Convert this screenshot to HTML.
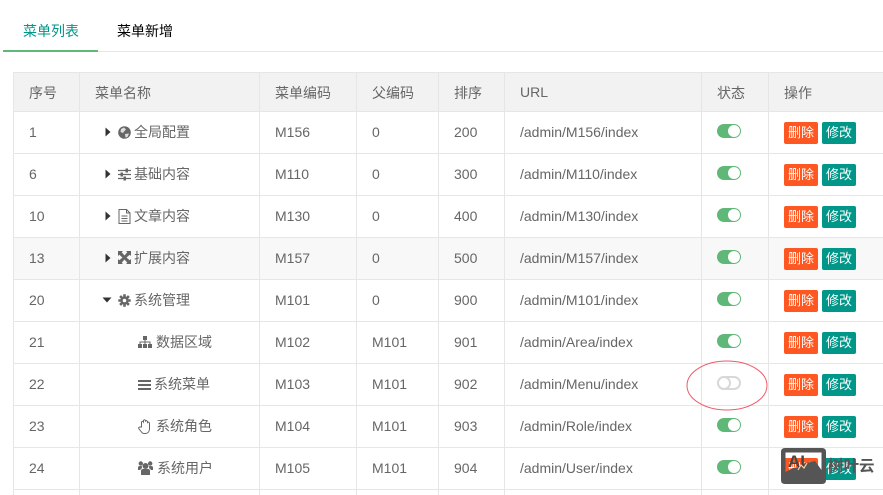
<!DOCTYPE html>
<html><head><meta charset="utf-8">
<style>
html,body{margin:0;padding:0;background:#fff}
body{width:883px;height:495px;overflow:hidden;position:relative;font-family:"Liberation Sans","Noto Sans CJK SC",sans-serif;font-size:14px;color:#666}
.a{position:absolute;white-space:nowrap;line-height:20px}
.l{position:absolute;background:#e6e6e6}
.sw{position:absolute;width:24px;height:14px;left:717px;border-radius:8px;background:#5fb878;box-sizing:border-box}
.sw i{position:absolute;right:1px;top:1px;width:12px;height:12px;border-radius:50%;background:#fff}
.sw.off{background:#fff;border:2px solid #d8d8d8}
.sw.off i{left:-2px;right:auto;top:-2px;width:14px;height:14px;background:#fff;border:2px solid #d8d8d8;box-sizing:border-box}
.b{position:absolute;height:22px;width:34px;line-height:22px;text-align:center;color:#fff;font-size:13px;border-radius:2px}
.d{left:784px;background:#ff5722}.e{left:822px;background:#009688}
svg{position:absolute}
</style></head><body>
<div class="a" style="left:23px;top:21px;color:#009688">菜单列表</div>
<div class="a" style="left:117px;top:21px;color:#000">菜单新增</div>
<div class="l" style="left:3px;top:51px;width:880px;height:1px"></div>
<div class="a" style="left:3px;top:50px;width:95px;height:2px;background:#5fb878"></div>

<div class="a" style="left:13px;top:72px;width:870px;height:39px;background:#f2f2f2"></div>
<div class="a" style="left:13px;top:237px;width:870px;height:42px;background:#f8f8f8"></div>

<div class="l" style="left:13px;top:72px;width:870px;height:1px"></div>
<div class="l" style="left:13px;top:111px;width:870px;height:1px"></div>
<div class="l" style="left:13px;top:153px;width:870px;height:1px"></div>
<div class="l" style="left:13px;top:195px;width:870px;height:1px"></div>
<div class="l" style="left:13px;top:237px;width:870px;height:1px"></div>
<div class="l" style="left:13px;top:279px;width:870px;height:1px"></div>
<div class="l" style="left:13px;top:321px;width:870px;height:1px"></div>
<div class="l" style="left:13px;top:363px;width:870px;height:1px"></div>
<div class="l" style="left:13px;top:405px;width:870px;height:1px"></div>
<div class="l" style="left:13px;top:447px;width:870px;height:1px"></div>
<div class="l" style="left:13px;top:489px;width:870px;height:1px"></div>
<div class="l" style="left:13px;top:72px;width:1px;height:423px"></div>
<div class="l" style="left:79px;top:72px;width:1px;height:423px"></div>
<div class="l" style="left:259px;top:72px;width:1px;height:423px"></div>
<div class="l" style="left:356px;top:72px;width:1px;height:423px"></div>
<div class="l" style="left:438px;top:72px;width:1px;height:423px"></div>
<div class="l" style="left:504px;top:72px;width:1px;height:423px"></div>
<div class="l" style="left:701px;top:72px;width:1px;height:423px"></div>
<div class="l" style="left:768px;top:72px;width:1px;height:423px"></div>

<div class="a" style="left:29px;top:83px">序号</div>
<div class="a" style="left:95px;top:83px">菜单名称</div>
<div class="a" style="left:275px;top:83px">菜单编码</div>
<div class="a" style="left:372px;top:83px">父编码</div>
<div class="a" style="left:454px;top:83px">排序</div>
<div class="a" style="left:520px;top:82px">URL</div>
<div class="a" style="left:717px;top:83px">状态</div>
<div class="a" style="left:784px;top:83px">操作</div>

<!-- rows -->
<div class="a" style="left:29px;top:122px">1</div><div class="a" style="left:134px;top:122px">全局配置</div><div class="a" style="left:275px;top:122px">M156</div><div class="a" style="left:372px;top:122px">0</div><div class="a" style="left:454px;top:122px">200</div><div class="a" style="left:520px;top:122px">/admin/M156/index</div>
<div class="a" style="left:29px;top:164px">6</div><div class="a" style="left:134px;top:164px">基础内容</div><div class="a" style="left:275px;top:164px">M110</div><div class="a" style="left:372px;top:164px">0</div><div class="a" style="left:454px;top:164px">300</div><div class="a" style="left:520px;top:164px">/admin/M110/index</div>
<div class="a" style="left:29px;top:206px">10</div><div class="a" style="left:134px;top:206px">文章内容</div><div class="a" style="left:275px;top:206px">M130</div><div class="a" style="left:372px;top:206px">0</div><div class="a" style="left:454px;top:206px">400</div><div class="a" style="left:520px;top:206px">/admin/M130/index</div>
<div class="a" style="left:29px;top:248px">13</div><div class="a" style="left:134px;top:248px">扩展内容</div><div class="a" style="left:275px;top:248px">M157</div><div class="a" style="left:372px;top:248px">0</div><div class="a" style="left:454px;top:248px">500</div><div class="a" style="left:520px;top:248px">/admin/M157/index</div>
<div class="a" style="left:29px;top:290px">20</div><div class="a" style="left:134px;top:290px">系统管理</div><div class="a" style="left:275px;top:290px">M101</div><div class="a" style="left:372px;top:290px">0</div><div class="a" style="left:454px;top:290px">900</div><div class="a" style="left:520px;top:290px">/admin/M101/index</div>
<div class="a" style="left:29px;top:332px">21</div><div class="a" style="left:156px;top:332px">数据区域</div><div class="a" style="left:275px;top:332px">M102</div><div class="a" style="left:372px;top:332px">M101</div><div class="a" style="left:454px;top:332px">901</div><div class="a" style="left:520px;top:332px">/admin/Area/index</div>
<div class="a" style="left:29px;top:374px">22</div><div class="a" style="left:154px;top:374px">系统菜单</div><div class="a" style="left:275px;top:374px">M103</div><div class="a" style="left:372px;top:374px">M101</div><div class="a" style="left:454px;top:374px">902</div><div class="a" style="left:520px;top:374px">/admin/Menu/index</div>
<div class="a" style="left:29px;top:416px">23</div><div class="a" style="left:156px;top:416px">系统角色</div><div class="a" style="left:275px;top:416px">M104</div><div class="a" style="left:372px;top:416px">M101</div><div class="a" style="left:454px;top:416px">903</div><div class="a" style="left:520px;top:416px">/admin/Role/index</div>
<div class="a" style="left:29px;top:458px">24</div><div class="a" style="left:157px;top:458px">系统用户</div><div class="a" style="left:275px;top:458px">M105</div><div class="a" style="left:372px;top:458px">M101</div><div class="a" style="left:454px;top:458px">904</div><div class="a" style="left:520px;top:458px">/admin/User/index</div>

<!-- arrows -->
<svg style="left:105px;top:127px" width="6" height="10"><path d="M0.5 0.5L5.5 5L0.5 9.5Z" fill="#333"/></svg>
<svg style="left:105px;top:169px" width="6" height="10"><path d="M0.5 0.5L5.5 5L0.5 9.5Z" fill="#333"/></svg>
<svg style="left:105px;top:211px" width="6" height="10"><path d="M0.5 0.5L5.5 5L0.5 9.5Z" fill="#333"/></svg>
<svg style="left:105px;top:253px" width="6" height="10"><path d="M0.5 0.5L5.5 5L0.5 9.5Z" fill="#333"/></svg>
<svg style="left:102px;top:297px" width="10" height="6"><path d="M0.5 0.5L9.5 0.5L5 5.5Z" fill="#333"/></svg>

<!-- icons -->
<svg style="left:118px;top:126px" width="13" height="13" viewBox="0 0 13 13"><circle cx="6.5" cy="6.5" r="6.3" fill="#666"/><path d="M6 1.5L3 3L2.5 6L5 7L6.5 5L8 3.5ZM7 8L11 7.5L9.5 11L7.5 11.5Z" fill="#ddd"/></svg>
<svg style="left:118px;top:168px" width="13" height="13" viewBox="0 0 13 13"><path d="M0 2.5H13M0 6.5H13M0 10.5H13" stroke="#666" stroke-width="1.2"/><rect x="7.5" y="0.5" width="2.5" height="4" fill="#666"/><rect x="2.5" y="4.5" width="2.5" height="4" fill="#666"/><rect x="5.5" y="8.5" width="2.5" height="4" fill="#666"/></svg>
<svg style="left:118px;top:209px" width="13" height="15" viewBox="0 0 13 15"><path d="M1 .5H8.5L12 4V14.5H1ZM8.5 .5V4H12M3.5 7H9.5M3.5 9.5H9.5M3.5 12H9.5" fill="none" stroke="#666"/></svg>
<svg style="left:118px;top:251px" width="13" height="13" viewBox="0 0 13 13"><path d="M0 0H5L3.7 1.3L6.5 4.5L9.3 1.3L8 0H13V5L11.7 3.7L8.5 6.5L11.7 9.3L13 8V13H8L9.3 11.7L6.5 8.5L3.7 11.7L5 13H0V8L1.3 9.3L4.5 6.5L1.3 3.7L0 5Z" fill="#666"/></svg>
<svg style="left:118px;top:294px" width="13" height="13" viewBox="0 0 13 13"><circle cx="6.5" cy="6.5" r="4" fill="#666"/><path d="M6.5 .3V12.7M.3 6.5H12.7M2.1 2.1L10.9 10.9M10.9 2.1L2.1 10.9" stroke="#666" stroke-width="2.6"/><circle cx="6.5" cy="6.5" r="1.8" fill="#fff"/></svg>
<svg style="left:138px;top:336px" width="14" height="12" viewBox="0 0 14 12"><rect x="5" y="0" width="4" height="4" fill="#666"/><rect x="0" y="8" width="4" height="4" fill="#666"/><rect x="5" y="8" width="4" height="4" fill="#666"/><rect x="10" y="8" width="4" height="4" fill="#666"/><path d="M2 8V6H12V8M7 4V8" fill="none" stroke="#666"/></svg>
<svg style="left:138px;top:380px" width="13" height="10" viewBox="0 0 13 10"><rect y="0" width="13" height="2" fill="#666"/><rect y="4" width="13" height="2" fill="#666"/><rect y="8" width="13" height="2" fill="#666"/></svg>
<svg style="left:138px;top:419px" width="13" height="15" viewBox="0 0 13 15"><path d="M3.5 8V3Q4.5 1.5 5.5 3V1.5Q6.5 0 7.5 1.5V2Q8.5 1 9.5 2.5V3.5Q10.5 2.5 11.5 4V10Q11 14.5 7.5 14.5H6Q4.5 14.5 3.5 13L.7 9.5Q.5 8 2 8Z" fill="#fff" stroke="#666"/></svg>
<svg style="left:138px;top:461px" width="15" height="14" viewBox="0 0 15 14"><circle cx="7.5" cy="5" r="3" fill="#666"/><circle cx="2.8" cy="2.5" r="2.2" fill="#666"/><circle cx="12.2" cy="2.5" r="2.2" fill="#666"/><path d="M3 14V10Q3 8 5 8H10Q12 8 12 10V14Z" fill="#666"/><path d="M0 8.5V6.5Q0 5 2 5H3.8L4 7.2Q2.5 7.5 2.2 9H0ZM15 8.5V6.5Q15 5 13 5H11.2L11 7.2Q12.5 7.5 12.8 9H15Z" fill="#666"/></svg>

<!-- switches -->
<div class="sw" style="top:124px"><i></i></div>
<div class="sw" style="top:166px"><i></i></div>
<div class="sw" style="top:208px"><i></i></div>
<div class="sw" style="top:250px"><i></i></div>
<div class="sw" style="top:292px"><i></i></div>
<div class="sw" style="top:334px"><i></i></div>
<div class="sw off" style="top:376px"><i></i></div>
<div class="sw" style="top:418px"><i></i></div>
<div class="sw" style="top:460px"><i></i></div>

<!-- buttons -->
<div class="b d" style="top:122px">删除</div><div class="b e" style="top:122px">修改</div>
<div class="b d" style="top:164px">删除</div><div class="b e" style="top:164px">修改</div>
<div class="b d" style="top:206px">删除</div><div class="b e" style="top:206px">修改</div>
<div class="b d" style="top:248px">删除</div><div class="b e" style="top:248px">修改</div>
<div class="b d" style="top:290px">删除</div><div class="b e" style="top:290px">修改</div>
<div class="b d" style="top:332px">删除</div><div class="b e" style="top:332px">修改</div>
<div class="b d" style="top:374px">删除</div><div class="b e" style="top:374px">修改</div>
<div class="b d" style="top:416px">删除</div><div class="b e" style="top:416px">修改</div>
<div class="b d" style="top:458px">删除</div><div class="b e" style="top:458px">修改</div>

<!-- red ellipse -->
<svg style="left:686px;top:360px" width="84" height="52"><ellipse cx="41" cy="25.5" rx="40" ry="24.5" fill="none" stroke="#ee5a68" stroke-width="1"/></svg>

<!-- watermark -->
<div class="a" style="left:828px;top:457px;font-size:15.5px;color:#555;font-weight:bold">树叶云</div>
<svg style="left:781px;top:448px" width="45" height="36" viewBox="0 0 45 36"><path fill-rule="evenodd" d="M4 0H41Q45 0 45 4V32Q45 36 41 36H4Q0 36 0 32V4Q0 0 4 0ZM4.500 4.500V24L12 20L18 19L24 15L30 14L34 13L40.500 22V4.500Z" fill="#555"/></svg>
<div class="a" style="left:788px;top:452px;font-size:17px;font-weight:bold;color:#444">AI</div>
<svg style="left:797px;top:462px" width="14" height="10" viewBox="0 0 14 10"><path d="M1 8L4 3L7 6L10 1" fill="none" stroke="#ffd0a0" stroke-width="1.2"/></svg>
</body></html>
